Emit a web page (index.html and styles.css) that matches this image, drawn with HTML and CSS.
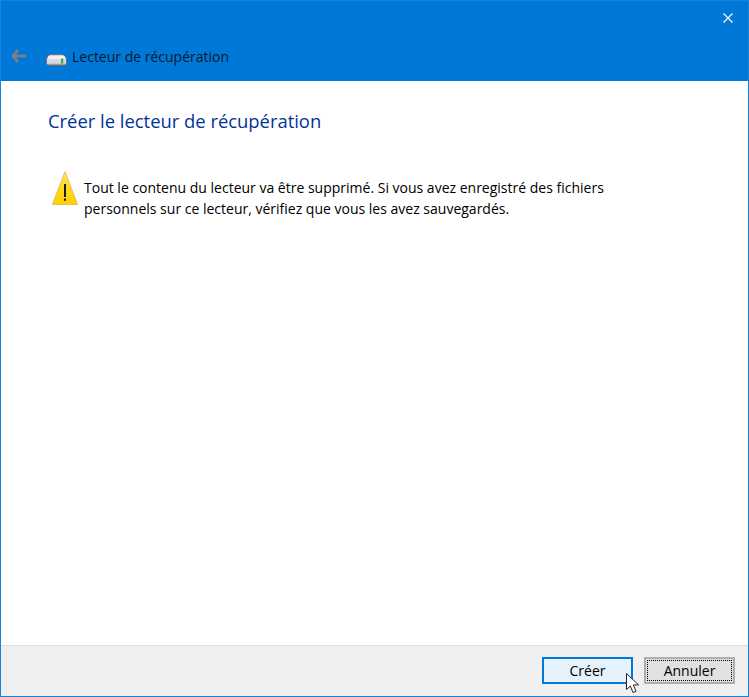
FILE: index.html
```html
<!DOCTYPE html>
<html lang="fr">
<head>
<meta charset="utf-8">
<title>Lecteur de récupération</title>
<link rel="stylesheet" href="styles.css">
</head>
<body>
<div class="window">
  <header class="titlebar">
    <div class="closerow">
      <svg class="close" width="10" height="10" viewBox="0 0 10 10"><path d="M.5.5l9 9M9.500.5l-9 9" stroke="#fff" stroke-width="1.100" fill="none"/></svg>
    </div>
    <div class="navrow">
      <svg class="back" width="15" height="14" viewBox="0 0 15 14"><path d="M7 1L1.800 7 7 13M2.500 7H15" stroke="#75808c" stroke-width="2.800" fill="none"/></svg>
      <svg class="drive" width="21" height="12" viewBox="0 0 21 12">
        <defs><linearGradient id="dg" x1="0" y1="0" x2="0" y2="1"><stop offset="0" stop-color="#e8e8e8"/><stop offset=".3" stop-color="#f6f6f6"/><stop offset=".45" stop-color="#d9dce6"/><stop offset=".8" stop-color="#d3d6e0"/><stop offset="1" stop-color="#8a8a8a"/></linearGradient></defs>
        <path d="M4.500 .7h12a3 3 0 0 1 2.600 1.500l1.200 2.300a3 3 0 0 1 .2 1v4a1.800 1.800 0 0 1-1.800 1.800H2.300a1.800 1.800 0 0 1-1.800-1.800v-4a3 3 0 0 1 .2-1l1.200-2.300A3 3 0 0 1 4.500 .7z" fill="url(#dg)" stroke="#6b6f76"/>
        <rect x="15" y="4.500" width="2.200" height="5" fill="#3fa535"/>
      </svg>
      <span class="apptitle">Lecteur de récupération</span>
    </div>
  </header>
  <main class="content">
    <h1 class="heading">Créer le lecteur de récupération</h1>
    <div class="warning">
      <svg class="warnicon" width="26" height="34" viewBox="0 0 26 34">
        <defs><linearGradient id="wg" x1="0" y1="0" x2="0" y2="1"><stop offset="0" stop-color="#fde26a"/><stop offset=".5" stop-color="#ffd91a"/><stop offset="1" stop-color="#ffd000"/></linearGradient></defs>
        <path d="M13 .6L25.600 33.500H.4z" fill="url(#wg)" stroke="#e0b84a" stroke-width=".8"/>
        <rect x="12" y="13" width="2" height="13" fill="#1c1c1c"/>
        <rect x="12" y="27.500" width="2" height="2.200" fill="#1c1c1c"/>
      </svg>
      <p class="message">Tout le contenu du lecteur va être supprimé. Si vous avez enregistré des fichiers<br>personnels sur ce lecteur, vérifiez que vous les avez sauvegardés.</p>
    </div>
  </main>
  <footer class="footer">
    <button class="btn btn-hover">Créer</button>
    <button class="btn btn-focus"><span class="focusring">Annuler</span></button>
    <svg class="cursor" width="14" height="21" viewBox="0 0 14 21"><path d="M.5.5V16.500L4.300 13l2.700 6.500 3-1.300L7.300 12l5.200-.2z" fill="#fff" stroke="#222" stroke-width="1"/></svg>
  </footer>
</div>
</body>
</html>
```
FILE: styles.css
```css
html, body {
  margin: 0;
  padding: 0;
  height: 100%;
}
body {
  font-family: "Open Sans", "Noto Sans", "Liberation Sans", sans-serif;
  font-size: 14px;
  color: #000;
  background: #fff;
}
.window {
  box-sizing: border-box;
  width: 749px;
  height: 697px;
  border: 1px solid #1883d7;
  display: flex;
  flex-direction: column;
  background: #fff;
}
.titlebar {
  height: 80px;
  flex: none;
  background: #0078d7;
  display: flex;
  flex-direction: column;
}
.closerow {
  display: flex;
  justify-content: flex-end;
  padding: 12px 15px 0 0;
  height: 18px;
}
.navrow {
  display: flex;
  align-items: center;
  margin-top: 12px;
  padding-left: 10px;
  height: 26px;
}
.back {
  margin-top: 0;
}
.drive {
  margin-left: 20px;
  margin-top: 7px;
}
.apptitle {
  margin-left: 5px;
  font-size: 14px;
  color: #04182c;
}
.content {
  flex: 1;
  padding: 0 47px;
}
.heading {
  margin: 26px 0 0;
  font-weight: 400;
  font-size: 18.400px;
  line-height: 28px;
  color: #003399;
}
.warning {
  display: flex;
  margin-top: 36px;
  padding-left: 4px;
}
.warnicon {
  flex: none;
}
.message {
  margin: 6px 0 0 6px;
  font-size: 14px;
  line-height: 21px;
}
.footer {
  position: relative;
  height: 51px;
  flex: none;
  box-sizing: border-box;
  background: #efefef;
  border-top: 1px solid #dfdfdf;
  display: flex;
  justify-content: flex-end;
  align-items: flex-start;
  gap: 11px;
  padding: 11px 13px 0 0;
}
.btn {
  box-sizing: border-box;
  width: 91px;
  height: 27px;
  font: inherit;
  font-size: 14px;
  color: #000;
  padding: 0;
  display: flex;
  align-items: center;
  justify-content: center;
}
.btn-hover {
  background: #e5f1fb;
  border: 2px solid #0078d7;
}
.btn-focus {
  background: #e1e1e1;
  border: 2px solid #adadad;
  padding: 1px;
}
.focusring {
  flex: 1;
  align-self: stretch;
  display: flex;
  align-items: center;
  justify-content: center;
  border: 1px dotted #000;
}
.cursor {
  position: absolute;
  left: 625px;
  top: 27px;
}
```
